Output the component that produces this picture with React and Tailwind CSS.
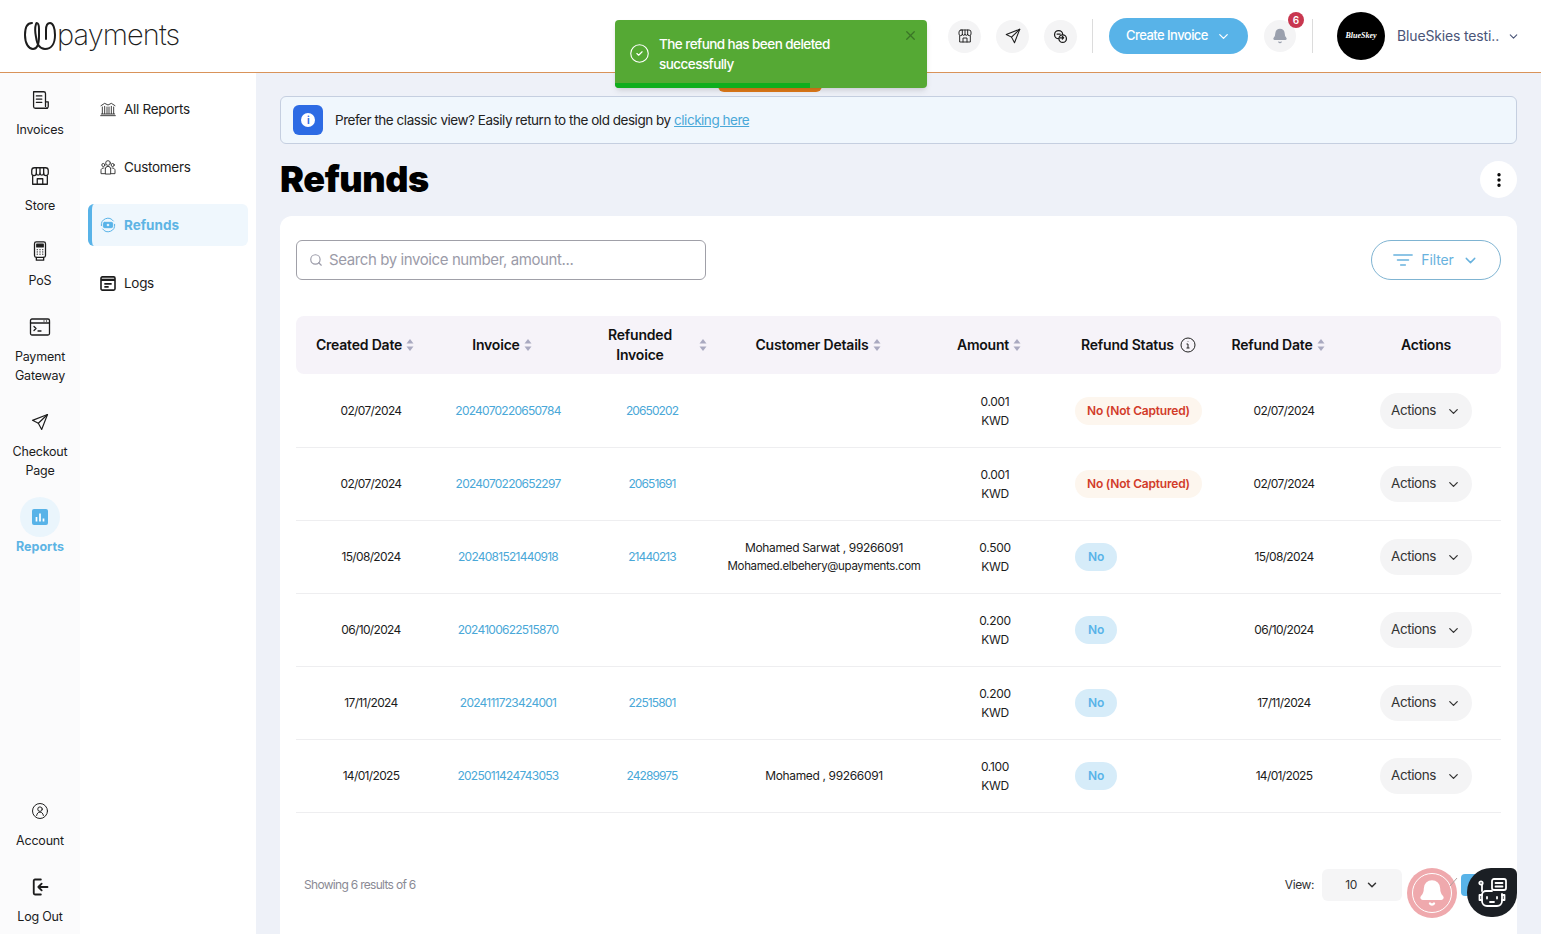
import React from "react";
import { ChevronDown, Search, X, CircleCheck, Bell, EllipsisVertical } from "lucide-react";

const cols = "grid grid-cols-[150px_124px_164px_180px_162px_136px_144px_140px] items-center";

const rows = [
  { created: "02/07/2024", invoice: "2024070220650784", refunded: "20650202", amount: "0.001", status: "red" },
  { created: "02/07/2024", invoice: "2024070220652297", refunded: "20651691", amount: "0.001", status: "red" },
  { created: "15/08/2024", invoice: "2024081521440918", refunded: "21440213", name: "Mohamed Sarwat , 99266091", email: "Mohamed.elbehery@upayments.com", amount: "0.500", status: "no" },
  { created: "06/10/2024", invoice: "2024100622515870", refunded: "", amount: "0.200", status: "no" },
  { created: "17/11/2024", invoice: "2024111723424001", refunded: "22515801", amount: "0.200", status: "no" },
  { created: "14/01/2025", invoice: "2025011424743053", refunded: "24289975", name: "Mohamed , 99266091", amount: "0.100", status: "no" },
];

function Stroke({ size = 20, sw = 1.5, children, className = "" }) {
  return (
    <svg width={size} height={size} viewBox="0 0 24 24" fill="none" stroke="currentColor" strokeWidth={sw} strokeLinecap="round" strokeLinejoin="round" className={className}>
      {children}
    </svg>
  );
}

const InvoiceIcon = () => (
  <Stroke size={22} sw={1.4}>
    <path d="M18 19V5a2 2 0 0 0-2-2H5v16a2 2 0 0 0 2 2h13" />
    <path d="M8 7.500h6M8 11h6M8 14.500h6" />
    <path d="M18 14h3v5a2 2 0 0 1-2 2" />
  </Stroke>
);
const StoreIcon = ({ size = 22 }) => (
  <Stroke size={size} sw={1.4}>
    <path d="M6 3h12a3 3 0 0 1 3 3v3a2.500 2.500 0 0 1-5 0 2 2 0 0 1-4 0 2 2 0 0 1-4 0 2.500 2.500 0 0 1-5 0V6a3 3 0 0 1 3-3z" />
    <path d="M8 3v6M12 3v6M16 3v6" />
    <path d="M4 12v9h16v-9M9 21v-6h6v6" />
  </Stroke>
);
const PosIcon = () => (
  <Stroke size={22} sw={1.4}>
    <rect x="6" y="2" width="12" height="17" rx="2" />
    <rect x="8.500" y="4.500" width="7" height="3" fill="currentColor" />
    <path d="M9 10.500h.01M12 10.500h.01M15 10.500h.01M9 13h.01M12 13h.01M15 13h.01M9 15.500h.01M12 15.500h.01M15 15.500h.01" />
    <path d="M8 19v3h8v-3" />
  </Stroke>
);
const TerminalIcon = () => (
  <Stroke size={24} sw={1.300}>
    <rect x="2.500" y="4" width="19" height="16" rx="1.500" />
    <path d="M2.500 8h19M16 6h.01M18.500 6h.01M6 11.500l2 2-2 2M10 16h3" />
  </Stroke>
);
const PlaneIcon = ({ size = 20 }) => (
  <Stroke size={size} sw={1.400}>
    <path d="M21 3L3 10l7 3.500L14 21z" />
    <path d="M10 13.500L21 3" />
  </Stroke>
);
const ExchangeIcon = () => (
  <Stroke size={15} sw={2}>
    <circle cx="9" cy="9" r="6.500" />
    <circle cx="15.500" cy="15.500" r="6" fill="#f4f4f5" />
    <path d="M6.500 8h5M11 14h6M15 12l2 2-2 2" />
  </Stroke>
);
const AccountIcon = () => (
  <Stroke size={18} sw={1.300}>
    <circle cx="12" cy="12" r="10" />
    <circle cx="12" cy="9.500" r="3" />
    <path d="M7.500 18c.5-3 2.200-4.500 4.500-4.500s4 1.500 4.500 4.500" />
  </Stroke>
);
const LogoutIcon = () => (
  <Stroke size={20} sw={2.200}>
    <path d="M13 3H6a1.500 1.500 0 0 0-1.500 1.500v15A1.500 1.500 0 0 0 6 21h7" />
    <path d="M21 12H10M14 8l-4 4 4 4" />
  </Stroke>
);
const BankIcon = () => (
  <Stroke size={18} sw={1.400} className="text-[#333]">
    <path d="M1 22h22M2 19.500h20M1.500 7l5.500-3.500 5 2.500 5-2.500L22.500 7" />
    <path d="M3.500 9v10M7 8v11M10.500 9v10M13.500 9v10M17 8v11M20.500 9v10" />
  </Stroke>
);
const UsersIcon = () => (
  <Stroke size={18} sw={1.400} className="text-[#333]">
    <circle cx="12" cy="6" r="3.500" />
    <circle cx="5" cy="9" r="2.300" />
    <circle cx="19" cy="9" r="2.300" />
    <path d="M8 22v-7a4 4 0 0 1 8 0v7zM8 22H1.500v-5a3.500 3.500 0 0 1 4.500-3.500M16 22h6.500v-5a3.500 3.500 0 0 0-4.500-3.500" />
  </Stroke>
);
const RefundIcon = () => (
  <svg width="18" height="18" viewBox="0 0 24 24" fill="none" stroke="#58b3e8" strokeWidth="1.500" strokeLinecap="round">
    <path d="M2 13A10 10 0 0 1 20 6M22 11A10 10 0 0 1 4 18" />
    <rect x="5" y="8" width="14" height="8" rx="2" fill="#58b3e8" />
    <circle cx="12" cy="12" r="2" fill="#dff0fb" stroke="none" />
  </svg>
);
const LogsIcon = () => (
  <svg width="17" height="17" viewBox="0 0 24 24" fill="none" stroke="#1c1c1c" strokeWidth="2.400">
    <rect x="1.500" y="2" width="21" height="20" rx="2" />
    <path d="M1.500 6.500h21" strokeWidth="3.500" />
    <path d="M6.500 12.500h11M6.500 17h6.500" />
  </svg>
);
const ReportsIcon = () => (
  <svg width="16" height="16" viewBox="0 0 16 16">
    <rect width="16" height="16" rx="2" fill="#58b3e8" />
    <path d="M4.500 8v4.500M8 4.500v8M11.500 9.500v3" stroke="#fff" strokeWidth="1.700" />
  </svg>
);
const LogoMark = () => (
  <svg width="34" height="30" viewBox="0 0 34 30" fill="none" stroke="#1c1c1c" strokeWidth="2" strokeLinecap="round">
    <path d="M8 2C3 2 1 7 1 14c0 9 4 14 8 14s6-5 6-13V8c0-4-1-6-2.500-6" />
    <path d="M12 3c-1 3-1 8 0 13 1 8 4 12 9 12 6 0 10-5 10-14 0-7-2-12-5-12-3 0-4 3-4 7v9" />
  </svg>
);
const BotIcon = () => (
  <svg width="32" height="32" viewBox="0 0 32 32" fill="none" stroke="#fff" strokeWidth="1.800" strokeLinecap="round" strokeLinejoin="round">
    <rect x="16" y="2" width="14" height="11" rx="2" />
    <path d="M19.500 6h7M19.500 9.500h7" />
    <path d="M6 8v6" />
    <circle cx="5" cy="6" r="1.700" />
    <path d="M16 14H10a4 4 0 0 0-4 4v6a5 5 0 0 0 5 5h10a5 5 0 0 0 5-5v-7" />
    <path d="M6 18H3.500v5H6M26 18h2.500v5H26" />
    <path d="M11 20v1.500M21 20v1.500M14 25h4" />
  </svg>
);

function SortArrows() {
  return (
    <svg width="8" height="12" viewBox="0 0 8 12" className="ml-1 shrink-0">
      <path d="M4 0l3.500 4.500h-7z" fill="#a9a9c0" />
      <path d="M4 12l3.500-4.500h-7z" fill="#a9a9c0" />
    </svg>
  );
}

function NavItem({ icon, label, active, className = "" }) {
  return (
    <div className={`flex flex-col items-center gap-2 ${className}`}>
      <div className="relative flex h-6 w-6 items-center justify-center text-[#1c1c1c]">
        {active && <div className="absolute left-[-8px] top-[-8px] h-10 w-10 rounded-full bg-[#eaf5fc]" />}
        <div className="relative flex">{icon}</div>
      </div>
      <div className={`text-center text-[12.5px] leading-[19px] ${active ? "font-bold text-[#5db4e4]" : "tracking-[-0.2px] text-[#1c1c1c]"}`}>
        {label}
      </div>
    </div>
  );
}

function SubItem({ icon, label, active }) {
  return (
    <div className={`flex h-[42px] items-center gap-2 rounded-md ${active ? "border-l-4 border-[#58b3e8] bg-[#eff7fd] pl-2 font-bold text-[#5db4e4]" : "pl-3 text-[#1c1c1c]"}`}>
      <div className="flex w-4 justify-center">{icon}</div>
      <span className={`text-[13.5px] ${active ? "tracking-[0px]" : "tracking-[-0.3px]"}`}>{label}</span>
    </div>
  );
}

function HeaderCircle({ children }) {
  return <div className="flex h-[33px] w-[33px] items-center justify-center rounded-full bg-[#f4f4f5] text-[#1c1c1c]">{children}</div>;
}

function Head({ label, sort = true }) {
  return (
    <div className={`flex items-center justify-center text-sm font-semibold tracking-[-0.2px] text-[#111] ${sort ? "pr-3" : ""}`}>
      {label}
      {sort && <SortArrows />}
    </div>
  );
}

function Row({ row }) {
  return (
    <div className={`${cols} h-[73px] border-b border-[#eeeef0] text-center text-xs text-[#1c1c1c]`}>
      <div className="tracking-[-0.65px]">{row.created}</div>
      <div className="tracking-[-0.75px] text-[#4aa8d8]">{row.invoice}</div>
      <div className="tracking-[-0.9px] text-[#4aa8d8]">{row.refunded}</div>
      <div className="flex flex-col items-center leading-[18px] tracking-[-0.35px]">
        {row.name && <div className="whitespace-nowrap">{row.name}</div>}
        {row.email && <div className="whitespace-nowrap text-[11.5px]">{row.email}</div>}
      </div>
      <div className="leading-[19px] tracking-[-0.3px]">
        <div>{row.amount}</div>
        <div>KWD</div>
      </div>
      <div className="ml-[-1px] flex tracking-[-0.2px]">
        {row.status === "red" ? (
          <span className="flex h-7 items-center rounded-full bg-[#fdf6ee] px-3 font-semibold text-[#d23c2a]">No (Not Captured)</span>
        ) : (
          <span className="flex h-7 w-[42px] items-center justify-center rounded-full bg-[#d6ecf9] font-semibold text-[#58b3e8]">No</span>
        )}
      </div>
      <div className="tracking-[-0.65px]">{row.created}</div>
      <div className="flex justify-center">
        <div className="flex h-9 w-[92px] items-center justify-center gap-[10px] rounded-full bg-[#f4f4f5] text-[13.5px] tracking-[-0.45px] text-[#333]">
          Actions
          <ChevronDown size={15} strokeWidth={2} />
        </div>
      </div>
    </div>
  );
}

export default function App() {
  return (
    <div className="relative flex h-[934px] flex-col overflow-hidden bg-white font-['Inter',sans-serif]">
      <header className="flex h-[73px] shrink-0 items-center border-b border-[#d9935a] bg-white pl-6 pr-[21px]">
        <div className="flex items-center">
          <LogoMark />
          <span className="mb-1 ml-[-1px] text-[29px] font-extralight leading-none tracking-[-0.9px] text-[#1c1c1c]">payments</span>
        </div>
        <div className="ml-auto flex items-center">
          <div className="flex items-center gap-[15px]">
            <HeaderCircle><StoreIcon size={16} /></HeaderCircle>
            <HeaderCircle><PlaneIcon size={18} /></HeaderCircle>
            <HeaderCircle><ExchangeIcon /></HeaderCircle>
          </div>
          <div className="ml-[15px] h-[34px] w-px bg-[#dcdcdc]" />
          <div className="ml-4 flex h-9 w-[139px] items-center justify-center gap-2 rounded-full bg-[#58b3e8] text-[13px] font-medium tracking-[-0.55px] text-white">
            Create Invoice
            <ChevronDown size={15} />
          </div>
          <div className="relative ml-4 flex h-8 w-8 items-center justify-center rounded-full bg-[#f4f4f5]">
            <Bell size={16} fill="#9aa0ad" stroke="#9aa0ad" />
            <span className="absolute right-[-8px] top-[-8px] flex h-4 w-4 items-center justify-center rounded-full bg-[#c8374f] text-[10px] font-semibold text-white">6</span>
          </div>
          <div className="ml-4 h-[34px] w-px bg-[#dcdcdc]" />
          <div className="ml-6 flex h-12 w-12 items-center justify-center rounded-full bg-black font-['Liberation_Serif',serif] text-[8px] font-bold italic text-white">
            BlueSkey
          </div>
          <span className="ml-3 w-[110px] whitespace-nowrap text-sm tracking-[-0.15px] text-[#4a5578]">BlueSkies testi..</span>
          <ChevronDown size={13} className="text-[#4a5578]" />
        </div>
      </header>

      <div className="flex min-h-0 flex-1">
        <aside className="flex w-20 shrink-0 flex-col bg-[#fbfbfc] pb-2 pt-[15px]">
          <div className="flex flex-col gap-[25px]">
            <NavItem icon={<InvoiceIcon />} label="Invoices" />
            <NavItem icon={<StoreIcon />} label="Store" />
            <NavItem icon={<PosIcon />} label="PoS" className="mt-[-1px]" />
            <NavItem icon={<TerminalIcon />} label={<>Payment<br />Gateway</>} />
            <NavItem icon={<PlaneIcon />} label={<>Checkout<br />Page</>} />
            <NavItem icon={<ReportsIcon />} label="Reports" active />
          </div>
          <div className="mt-auto flex flex-col gap-[25px]">
            <NavItem icon={<AccountIcon />} label="Account" />
            <NavItem icon={<LogoutIcon />} label="Log Out" />
          </div>
        </aside>

        <nav className="flex w-[176px] shrink-0 flex-col gap-4 bg-white px-2 pt-[15px]">
          <SubItem icon={<BankIcon />} label="All Reports" />
          <SubItem icon={<UsersIcon />} label="Customers" />
          <SubItem icon={<RefundIcon />} label="Refunds" active />
          <SubItem icon={<LogsIcon />} label="Logs" />
        </nav>

        <main className="min-w-0 flex-1 bg-[#eef1f8] px-6 pt-[23px]">
          <div className="flex h-12 items-center gap-3 rounded-md border border-[#c5cfe0] bg-[#f0f7fd] pl-3 text-[13.5px] tracking-[-0.47px] text-[#222]">
            <div className="flex h-[30px] w-[30px] items-center justify-center rounded-md bg-[#2d6be4]">
              <div className="flex h-[14px] w-[14px] items-center justify-center rounded-full bg-white text-[10px] font-bold text-[#2d6be4]">i</div>
            </div>
            <span>
              Prefer the classic view? Easily return to the old design by{" "}
              <span className="text-[#4aa8d8] underline">clicking here</span>
            </span>
          </div>

          <div className="mt-[17px] flex h-[37px] items-center justify-between">
            <h1 className="pb-[2px] text-[36px] font-black leading-none tracking-[-0.45px] text-black">Refunds</h1>
            <div className="flex h-[37px] w-[37px] items-center justify-center rounded-full bg-white text-black">
              <EllipsisVertical size={18} strokeWidth={2.5} />
            </div>
          </div>

          <section className="mt-[18px] h-[800px] rounded-xl bg-white px-4 pt-6">
            <div className="flex items-center justify-between">
              <div className="flex h-10 w-[410px] items-center gap-[6px] rounded-md border border-[#a0a0a8] pl-3">
                <Search size={14} className="text-[#9b9ba8]" />
                <span className="text-[15px] tracking-[-0.4px] text-[#9b9ba8]">Search by invoice number, amount...</span>
              </div>
              <div className="flex h-10 w-[130px] items-center justify-center gap-2 rounded-full border border-[#7fb4d2] text-sm tracking-[-0.1px] text-[#68b2de]">
                <svg width="20" height="14" viewBox="0 0 22 14" fill="none" stroke="#68b2de" strokeWidth="1.800" strokeLinecap="round">
                  <path d="M1 1.500h20M5 7h12M8.500 12.500h5" />
                </svg>
                Filter
                <ChevronDown size={17} />
              </div>
            </div>

            <div className={`${cols} mt-9 h-[58px] rounded-lg bg-[#f6f3f9]`}>
              <Head label="Created Date" />
              <Head label="Invoice" />
              <div className="flex items-center pl-[25px] text-sm font-semibold tracking-[-0.2px] text-[#111]">
                <span className="w-[90px] text-center leading-5">Refunded<br />Invoice</span>
                <span className="ml-[10px] flex"><SortArrows /></span>
              </div>
              <Head label="Customer Details" />
              <Head label="Amount" />
              <div className="flex items-center gap-[6px] pl-[5px] text-sm font-semibold tracking-[-0.2px] text-[#111]">
                Refund Status
                <svg width="16" height="16" viewBox="0 0 16 16" fill="none" stroke="#222" strokeWidth="1">
                  <circle cx="8" cy="8" r="7" />
                  <path d="M6.500 7H8v4M6.500 11h3M8 4.500v.5" />
                </svg>
              </div>
              <Head label="Refund Date" />
              <Head label="Actions" sort={false} />
            </div>

            <div className="mt-[1px]">
              {rows.map((row) => (
                <Row key={row.invoice} row={row} />
              ))}
            </div>

            <div className="mt-[56px] flex h-8 items-center justify-between pl-2 pr-[99px]">
              <span className="text-xs tracking-[-0.7px] text-[#8a8a94]">Showing 6 results of 6</span>
              <div className="flex items-center gap-2">
                <span className="text-xs tracking-[-0.4px] text-[#333]">View:</span>
                <div className="flex h-8 w-20 items-center justify-center gap-2 rounded-md bg-[#f5f5f6] text-xs tracking-[-0.5px] text-[#333]">
                  10
                  <ChevronDown size={14} strokeWidth={2.5} />
                </div>
              </div>
            </div>
          </section>
        </main>
      </div>

      {/* overlays */}
      <div className="absolute left-[718px] top-[80px] h-3 w-[104px] rounded-b-md bg-[#e07a1a]" />
      <div className="absolute left-[615px] top-5 h-[68px] w-[312px] overflow-hidden rounded bg-[#55a934] shadow-md">
        <div className="flex h-full items-center pb-[1px] pl-[14px]">
          <CircleCheck size={21} strokeWidth={1.300} className="text-white" />
          <div className="ml-[9px] text-[13.5px] font-medium leading-5 tracking-[-0.55px] text-white">
            The refund has been deleted<br />successfully
          </div>
        </div>
        <X size={15} className="absolute right-[9px] top-2 text-[#3a7526]" />
        <div className="absolute bottom-0 left-0 h-[5px] w-[195px] bg-[#0fae1d]" />
      </div>

      <div className="absolute left-[1461px] top-[874px] h-[22px] w-8 rounded bg-[#58b3e8]" />
      <div className="absolute left-[1407px] top-[868px] flex h-[50px] w-[50px] items-center justify-center rounded-full bg-[#efa9ad]">
        <div className="flex h-10 w-10 items-center justify-center rounded-full border border-white">
          <Bell size={28} fill="#fff" stroke="#fff" />
        </div>
      </div>
      <svg width="10" height="12" viewBox="0 0 10 12" fill="none" stroke="#b0a0a0" strokeWidth="1" className="absolute left-[1449px] top-[877px]">
        <path d="M8 1L1 9" />
      </svg>
      <div className="absolute left-[1467px] top-[868px] flex h-[49px] w-[50px] items-center justify-center rounded-[24px] rounded-tr-md bg-[#1b1f24]">
        <BotIcon />
      </div>
    </div>
  );
}
